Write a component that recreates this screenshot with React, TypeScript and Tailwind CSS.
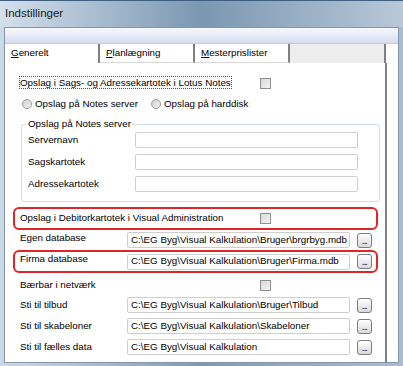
import type { ReactNode } from "react";

const font = "font-['Liberation_Sans',Arial,sans-serif]";

const Check = () => (
	<div className="w-[11px] h-[11px] border border-[#8f8f8f] bg-gradient-to-br from-[#d9d9d9] to-[#f4f4f4] shrink-0" />
);

const Radio = () => (
	<div className="w-[10px] h-[10px] rounded-full border border-[#9a9a9a] bg-gradient-to-br from-[#cfcfcf] to-[#f5f5f5] shrink-0" />
);

const Field = ({ value = "" }: { value?: string }) => (
	<div className="w-[223px] h-[16px] border border-[#cfcfcf] rounded-[2px] bg-white flex items-center pl-[3px] text-[9.8px] text-black whitespace-nowrap overflow-hidden">
		{value}
	</div>
);

const Dots = () => (
	<div className="w-[15px] h-[15px] ml-[7px] border border-[#7d7d7d] rounded-[3px] bg-gradient-to-b from-white to-[#dadada] flex items-end justify-center pb-[2px]">
		<span className="text-[8px] leading-[6px] font-bold text-[#1b3a7a] tracking-[-0.5px]">...</span>
	</div>
);

const Row = ({ label, children }: { label: string; children?: ReactNode }) => (
	<div className="flex items-center h-[16px]">
		<span className="w-[107px] shrink-0">{label}</span>
		{children}
	</div>
);

const Tab = ({ first, rest, active }: { first: string; rest: string; active?: boolean }) => (
	<div
		className={`h-full w-[95px] flex items-center pl-[6px] border-r-2 border-[#7f7f7f] ${
			active ? "bg-white" : "bg-white border-b border-b-[#d8d8d8]"
		}`}>
		<span>
			<span className="underline">{first}</span>
			{rest}
		</span>
	</div>
);

export default function App() {
	return (
		<div
			className={`${font} w-[403px] h-[366px] flex flex-col bg-gradient-to-r from-[#cbdae8] via-[#7e9ab5] to-[#aabdd0] border-t border-[#3f5f80] text-[9.8px] text-black`}>
			{/* title bar */}
			<div className="h-[26px] flex items-center pl-[5px] bg-gradient-to-r from-[#d4e0ec] via-[#7b97b2] to-[#b8c8d8]">
				<span className="text-[11.5px] text-[#1a1a1a]">Indstillinger</span>
			</div>

			{/* client */}
			<div className="flex-1 flex ml-[4px] mr-[4px] mb-[3px] border border-[#8596a8] bg-white flex-col">
				<div className="h-[16px] border-b border-[#c3cbe0] bg-gradient-to-b from-[#f7f8fd] to-[#d6ddf0] mx-[0px]" />

				<div className="h-[19px] flex w-[381px]">
					<Tab first="G" rest="enerelt" active />
					<Tab first="P" rest="lanlægning" />
					<Tab first="M" rest="esterprislister" />
					<div className="flex-1 bg-[#ededed] border-r-2 border-[#7f7f7f]" />
				</div>

				{/* panel */}
				<div className="flex-1 w-[382px] border-r-2 border-[#7f7f7f] pl-[15px] flex flex-col">
					<div className="flex items-center h-[16px] mt-[12px]">
						<span className="w-[240px] shrink-0">
							<span className="outline outline-1 outline-dotted outline-[#555]">
								Opslag i Sags- og Adressekartotek i Lotus Notes
							</span>
						</span>
						<Check />
					</div>

					<div className="flex items-center h-[16px] mt-[5px] pl-[2px]">
						<Radio />
						<span className="ml-[3px] w-[116px]">Opslag på Notes server</span>
						<Radio />
						<span className="ml-[3px]">Opslag på harddisk</span>
					</div>

					<fieldset className="mt-[6px] ml-[1px] w-[359px] h-[84px] border border-[#d5dde4] rounded-[3px] pl-[6px] pt-[2px] flex flex-col gap-[6px]">
						<legend className="px-[1px] ml-[-1px] leading-[12px]">Opslag på Notes server</legend>
						<Row label="Servernavn">
							<Field />
						</Row>
						<Row label="Sagskartotek">
							<Field />
						</Row>
						<Row label="Adressekartotek">
							<Field />
						</Row>
					</fieldset>

					<div className="mt-[5px] ml-[-7px] w-[365px] h-[23px] border-2 border-[#e0242a] rounded-[6px] pl-[5px] flex items-center">
						<span className="w-[240px] shrink-0">Opslag i Debitorkartotek i Visual Administration</span>
						<Check />
					</div>

					<div className="flex items-center h-[16px] mt-[2px]">
						<span className="w-[107px] shrink-0 -mt-[4px]">Egen database</span>
						<Field value="C:\EG Byg\Visual Kalkulation\Bruger\brgrbyg.mdb" />
						<Dots />
					</div>

					<div className="mt-[2px] ml-[-7px] w-[365px] h-[23px] border-2 border-[#e0242a] rounded-[6px] pl-[5px] flex items-center">
						<span className="w-[107px] shrink-0 -mt-[4px]">Firma database</span>
						<Field value="C:\EG Byg\Visual Kalkulation\Bruger\Firma.mdb" />
						<Dots />
					</div>

					<div className="flex items-center h-[16px] mt-[4px]">
						<span className="w-[240px] shrink-0">Bærbar i netværk</span>
						<Check />
					</div>

					<div className="flex flex-col gap-[5px] mt-[4px]">
						<Row label="Sti til tilbud">
							<Field value="C:\EG Byg\Visual Kalkulation\Bruger\Tilbud" />
							<Dots />
						</Row>
						<Row label="Sti til skabeloner">
							<Field value="C:\EG Byg\Visual Kalkulation\Skabeloner" />
							<Dots />
						</Row>
						<Row label="Sti til fælles data">
							<Field value="C:\EG Byg\Visual Kalkulation" />
							<Dots />
						</Row>
					</div>
				</div>
			</div>
		</div>
	);
}
